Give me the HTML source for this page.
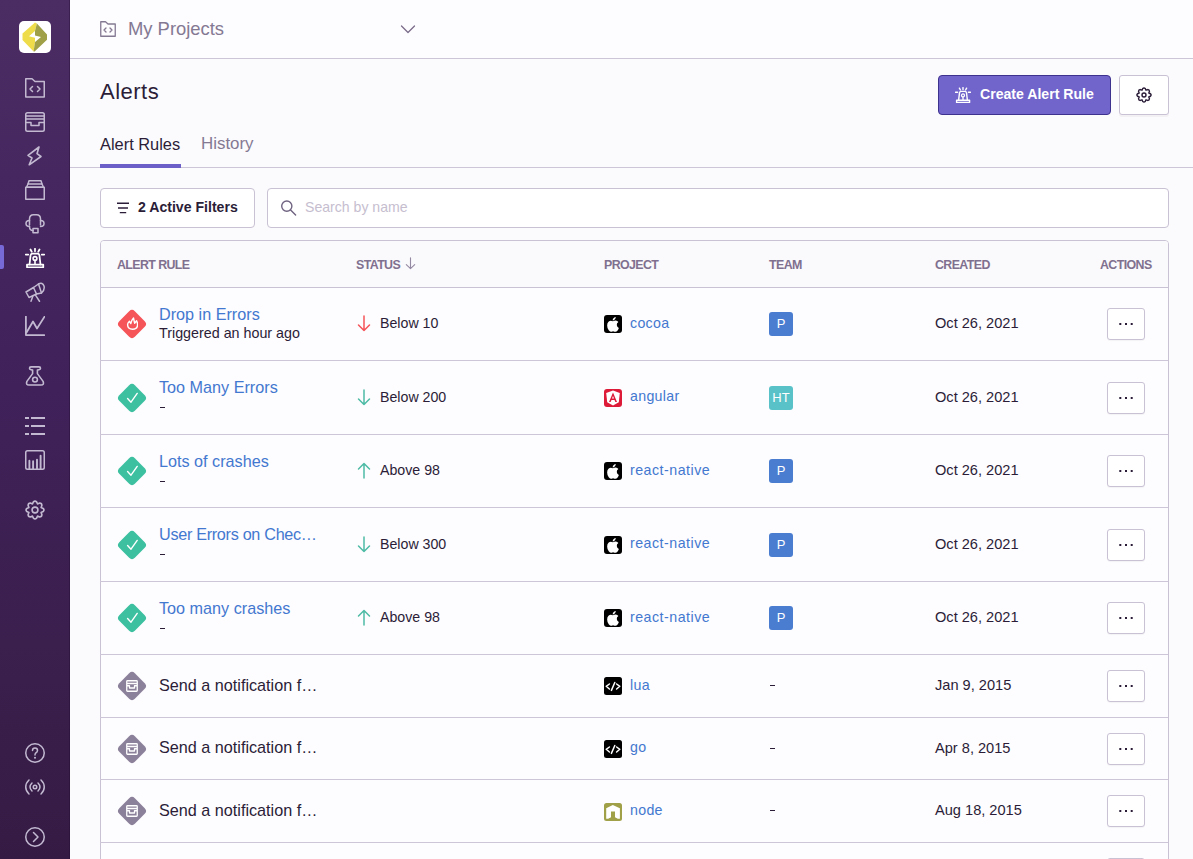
<!DOCTYPE html>
<html><head><meta charset="utf-8">
<style>
*{box-sizing:border-box;margin:0;padding:0}
html,body{width:1193px;height:859px;overflow:hidden;background:#fbfafc;font-family:"Liberation Sans",sans-serif;color:#2b1d38}
.abs{position:absolute}
.t{position:absolute;white-space:nowrap;line-height:1}
.link{color:#4378d0}
#sb{position:absolute;left:0;top:0;width:70px;height:859px;background:linear-gradient(180deg,#4b2c63 0%,#40215a 45%,#3b1f4d 75%,#351b44 100%)}
.th{position:absolute;top:258.5px;font-size:12.4px;letter-spacing:-0.6px;font-weight:700;color:#80708f;white-space:nowrap;line-height:1}
</style></head><body>
<div id="sb"></div>
<div class="abs" style="left:69px;top:0;width:1px;height:859px;background:rgba(30,10,45,0.35)"></div>
<div class="abs" style="left:19px;top:21px;width:32px;height:32px;background:#fff;border-radius:5px"></div>
<svg class="abs" style="left:19px;top:21px;" width="32" height="32" viewBox="0 0 32 32"><path d="M16 1.5 L3.5 12.5 L3.5 19 L14.6 30.5 L16 21 L16 16.8 L10 15.3 L16 10 L17.9 2.5 Z" fill="#efdc4b"/><path d="M17.9 2.5 L28 13.5 L28 18.8 L15.6 30.6 L14.6 30.5 L16 21 L22 16 L16 14.5 L16 10 Z" fill="#9fa047"/></svg>
<svg class="abs" style="left:25px;top:78px;" width="20" height="20" viewBox="0 0 20 20"><path d="M0.75 19 V0.75 H7 L10 3.5 H19.25 V19 Z" fill="none" stroke="#c3bad2" stroke-width="1.5" stroke-linecap="round" stroke-linejoin="round" /><path d="M7.5 8.5 L5 11 L7.5 13.5 M12.5 8.5 L15 11 L12.5 13.5" fill="none" stroke="#c3bad2" stroke-width="1.5" stroke-linecap="round" stroke-linejoin="round" /></svg>
<svg class="abs" style="left:25px;top:112px;" width="20" height="20" viewBox="0 0 20 20"><path d="M2.5 0.75 H17.5 Q19.25 0.75 19.25 2.5 V17.5 Q19.25 19.25 17.5 19.25 H2.5 Q0.75 19.25 0.75 17.5 V2.5 Q0.75 0.75 2.5 0.75 Z" fill="none" stroke="#c3bad2" stroke-width="1.5" stroke-linecap="round" stroke-linejoin="round" /><path d="M0.75 4 H19.25 M0.75 7 H19.25" fill="none" stroke="#c3bad2" stroke-width="1.5" stroke-linecap="round" stroke-linejoin="round" /><path d="M0.75 10.5 H6 V13.5 H14 V10.5 H19.25" fill="none" stroke="#c3bad2" stroke-width="1.5" stroke-linecap="round" stroke-linejoin="round" /></svg>
<svg class="abs" style="left:25px;top:146px;" width="20" height="20" viewBox="0 0 20 20"><path d="M14 1 L3 9.3 L7 12 L4.2 18.8 L16 10.5 L12 7.7 Z" fill="none" stroke="#c3bad2" stroke-width="1.6" stroke-linecap="round" stroke-linejoin="round" /></svg>
<svg class="abs" style="left:25px;top:180px;" width="20" height="20" viewBox="0 0 20 20"><path d="M4 0.75 H16 L17 4 H3 Z" fill="none" stroke="#c3bad2" stroke-width="1.5" stroke-linecap="round" stroke-linejoin="round" /><path d="M3 4 L1.5 7.25 H18.5 L17 4" fill="none" stroke="#c3bad2" stroke-width="1.5" stroke-linecap="round" stroke-linejoin="round" /><path d="M0.75 7.25 H19.25 V19.25 H0.75 Z" fill="none" stroke="#c3bad2" stroke-width="1.5" stroke-linecap="round" stroke-linejoin="round" /></svg>
<svg class="abs" style="left:25px;top:214px;" width="20" height="20" viewBox="0 0 20 20"><path d="M4.5 11 V5 Q4.5 0.75 8.5 0.75 H11.5 Q15.5 0.75 15.5 5 V11" fill="none" stroke="#c3bad2" stroke-width="1.5" stroke-linecap="round" stroke-linejoin="round" /><path d="M4.5 6.5 Q1 6.5 1 9.5 Q1 12.5 4.5 12.5 M15.5 6.5 Q19 6.5 19 9.5 Q19 12.5 15.5 12.5" fill="none" stroke="#c3bad2" stroke-width="1.5" stroke-linecap="round" stroke-linejoin="round" /><path d="M4.5 12.5 Q4.5 16.5 8 16.5" fill="none" stroke="#c3bad2" stroke-width="1.5" stroke-linecap="round" stroke-linejoin="round" /><path d="M8 14.5 H13 V18.75 H8 Z" fill="none" stroke="#c3bad2" stroke-width="1.5" stroke-linecap="round" stroke-linejoin="round" /></svg>
<svg class="abs" style="left:25px;top:248px;" width="20" height="20" viewBox="0 0 20 20"><path d="M4.5 16.5 L5.6 7.2 Q5.9 5.5 7.6 5.5 H12.4 Q14.1 5.5 14.4 7.2 L15.5 16.5" fill="none" stroke="#ffffff" stroke-width="1.75" stroke-linecap="round" stroke-linejoin="round" /><path d="M2 16.5 H18.25 V19.25 H2 Z" fill="none" stroke="#ffffff" stroke-width="1.75" stroke-linecap="round" stroke-linejoin="round" /><path d="M10 0.75 V3.25 M5.5 1.5 L6.75 3.75 M14.5 1.5 L13.25 3.75 M0.75 6.5 H3.25 M16.75 6.5 H19.25" fill="none" stroke="#ffffff" stroke-width="1.75" stroke-linecap="round" stroke-linejoin="round" /><circle cx="10" cy="10.5" r="1.9" fill="none" stroke="#ffffff" stroke-width="1.6"/><path d="M10 12.4 V16" fill="none" stroke="#ffffff" stroke-width="1.6" stroke-linecap="round" stroke-linejoin="round" /></svg>
<svg class="abs" style="left:25px;top:282px;" width="20" height="20" viewBox="0 0 20 20"><path d="M1 10 L8.5 5.5 L11.5 12 L4 15.5 Z" fill="none" stroke="#c3bad2" stroke-width="1.5" stroke-linecap="round" stroke-linejoin="round" /><path d="M8.5 5.5 L13.5 2 Q17.5 0 19 4 Q20 8 16.5 11 L11.5 12" fill="none" stroke="#c3bad2" stroke-width="1.5" stroke-linecap="round" stroke-linejoin="round" /><path d="M13.5 2 L16.5 11" fill="none" stroke="#c3bad2" stroke-width="1.5" stroke-linecap="round" stroke-linejoin="round" /><path d="M8 13.8 L6 19.25 M10.3 12.9 L14.5 19.25" fill="none" stroke="#c3bad2" stroke-width="1.5" stroke-linecap="round" stroke-linejoin="round" /></svg>
<svg class="abs" style="left:25px;top:316px;" width="20" height="20" viewBox="0 0 20 20"><path d="M0.9 0.5 V19.1 H19.25" fill="none" stroke="#c3bad2" stroke-width="1.75" stroke-linecap="round" stroke-linejoin="round" /><path d="M1.5 16.5 L8 5.5 L12 12.5 L19.5 0.75" fill="none" stroke="#c3bad2" stroke-width="1.75" stroke-linecap="round" stroke-linejoin="round" /></svg>
<svg class="abs" style="left:25px;top:366px;" width="20" height="20" viewBox="0 0 20 20"><path d="M6 0.9 H14 Q15.5 0.9 15.5 2.3 Q15.5 3.6 14 3.8 L12.4 4.1 V7.6 L18.1 15.4 Q19.5 19 16 19 H4 Q0.5 19 1.9 15.4 L7.6 7.6 V4.1 L6 3.8 Q4.5 3.6 4.5 2.3 Q4.5 0.9 6 0.9 Z" fill="none" stroke="#c3bad2" stroke-width="1.6" stroke-linecap="round" stroke-linejoin="round" /><circle cx="10" cy="13.6" r="2.4" fill="none" stroke="#c3bad2" stroke-width="1.6"/></svg>
<svg class="abs" style="left:25px;top:416px;" width="20" height="20" viewBox="0 0 20 20"><path d="M0 2 H4 M6 2 H20 M0 10 H4 M6 10 H20 M0 18 H4 M6 18 H20" stroke="#c3bad2" stroke-width="2" fill="none"/></svg>
<svg class="abs" style="left:25px;top:450px;" width="20" height="20" viewBox="0 0 20 20"><path d="M2.5 0.75 H17.5 Q19.25 0.75 19.25 2.5 V17.5 Q19.25 19.25 17.5 19.25 H2.5 Q0.75 19.25 0.75 17.5 V2.5 Q0.75 0.75 2.5 0.75 Z" fill="none" stroke="#c3bad2" stroke-width="1.5" stroke-linecap="round" stroke-linejoin="round" /><path d="M4.4 18.5 V10.8 M8.1 18.5 V11.3 M12 18.5 V9.7 M15.6 18.5 V5.8" fill="none" stroke="#c3bad2" stroke-width="1.9" stroke-linecap="round" stroke-linejoin="round" /></svg>
<svg class="abs" style="left:25px;top:500px;" width="20" height="20" viewBox="0 0 20 20"><path d="M7.47 3.90 L8.42 1.85 Q10.00 0.28 11.58 1.85 L12.53 3.90 L14.64 3.12 Q16.87 3.13 16.88 5.36 L16.10 7.47 L18.15 8.42 Q19.72 10.00 18.15 11.58 L16.10 12.53 L16.88 14.64 Q16.87 16.87 14.64 16.88 L12.53 16.10 L11.58 18.15 Q10.00 19.72 8.42 18.15 L7.47 16.10 L5.36 16.88 Q3.13 16.87 3.12 14.64 L3.90 12.53 L1.85 11.58 Q0.28 10.00 1.85 8.42 L3.90 7.47 L3.12 5.36 Q3.13 3.13 5.36 3.12 Z" fill="none" stroke="#c3bad2" stroke-width="1.6" stroke-linecap="round" stroke-linejoin="round" /><circle cx="10" cy="10" r="2.9" fill="none" stroke="#c3bad2" stroke-width="1.6"/></svg>
<svg class="abs" style="left:25px;top:743px;" width="20" height="20" viewBox="0 0 20 20"><circle cx="10" cy="10" r="9.25" fill="none" stroke="#c3bad2" stroke-width="1.5"/><path d="M7.5 7.5 Q7.5 5 10 5 Q12.5 5 12.5 7.5 Q12.5 9 10.75 10 Q10 10.5 10 12" fill="none" stroke="#c3bad2" stroke-width="1.5" stroke-linecap="round" stroke-linejoin="round" /><circle cx="10" cy="14.75" r="1" fill="#c3bad2"/></svg>
<svg class="abs" style="left:25px;top:777px;" width="20" height="20" viewBox="0 0 20 20"><path d="M4 3 Q0.75 6 0.75 10 Q0.75 14 4 17 M16 3 Q19.25 6 19.25 10 Q19.25 14 16 17 M7 6 Q5 8 5 10 Q5 12 7 14 M13 6 Q15 8 15 10 Q15 12 13 14" fill="none" stroke="#c3bad2" stroke-width="1.5" stroke-linecap="round" stroke-linejoin="round" /><circle cx="10" cy="10" r="1.75" fill="none" stroke="#c3bad2" stroke-width="1.5"/></svg>
<svg class="abs" style="left:25px;top:827px;" width="20" height="20" viewBox="0 0 20 20"><circle cx="10" cy="10" r="9.25" fill="none" stroke="#c3bad2" stroke-width="1.5"/><path d="M8.5 5.5 L13 10 L8.5 14.5" fill="none" stroke="#c3bad2" stroke-width="1.5" stroke-linecap="round" stroke-linejoin="round" /></svg>
<div class="abs" style="left:0;top:245px;width:4px;height:24px;background:#776ad6;border-radius:0 2px 2px 0"></div>
<div class="abs" style="left:70px;top:0;width:1123px;height:59px;background:#fdfcfe;border-bottom:1px solid #cdc6d8"></div>
<svg class="abs" style="left:100px;top:21px;" width="16" height="16" viewBox="0 0 16 16"><path d="M0.75 15.25 V0.75 H5.5 L8 3 H15.25 V15.25 Z" fill="none" stroke="#847993" stroke-width="1.3" stroke-linecap="round" stroke-linejoin="round" /><path d="M6 7 L4 9 L6 11 M10 7 L12 9 L10 11" fill="none" stroke="#847993" stroke-width="1.3" stroke-linecap="round" stroke-linejoin="round" /></svg>
<div class="t" style="left:128px;top:20px;font-size:18.4px;color:#847993">My Projects</div>
<svg class="abs" style="left:400px;top:23px;" width="16" height="12" viewBox="0 0 16 12"><path d="M1.5 3 L8 9.5 L14.5 3" fill="none" stroke="#7a6c8a" stroke-width="1.3" stroke-linecap="round" stroke-linejoin="round" /></svg>
<div class="abs" style="left:70px;top:59px;width:1123px;height:109px;background:#fbfafc;border-bottom:1px solid #cdc6d8"></div>
<div class="t" style="left:100px;top:80.5px;font-size:22px;letter-spacing:0.5px">Alerts</div>
<div class="t" style="left:100px;top:135.5px;font-size:16.4px">Alert Rules</div>
<div class="t" style="left:201px;top:136px;font-size:16.9px;color:#847993">History</div>
<div class="abs" style="left:100px;top:164px;width:81px;height:4px;background:#6c5fc7"></div>
<div class="abs" style="left:938px;top:75px;width:173px;height:40px;background:#7164cb;border:1px solid #3e328f;border-radius:4px"></div>
<svg class="abs" style="left:955px;top:87px;" width="16" height="16" viewBox="0 0 16 16"><path d="M3.6 13.2 L4.5 5.8 Q4.7 4.4 6.1 4.4 H9.9 Q11.3 4.4 11.5 5.8 L12.4 13.2" fill="none" stroke="#fff" stroke-width="1.4" stroke-linecap="round" stroke-linejoin="round" /><path d="M1.6 13.2 H14.6 V15.4 H1.6 Z" fill="none" stroke="#fff" stroke-width="1.4" stroke-linecap="round" stroke-linejoin="round" /><path d="M8 0.6 V2.6 M4.4 1.2 L5.4 3 M11.6 1.2 L10.6 3 M0.6 5.2 H2.6 M13.4 5.2 H15.4" fill="none" stroke="#fff" stroke-width="1.4" stroke-linecap="round" stroke-linejoin="round" /><circle cx="8" cy="8.4" r="1.5" fill="none" stroke="#fff" stroke-width="1.3"/><path d="M8 9.9 V13" fill="none" stroke="#fff" stroke-width="1.3" stroke-linecap="round" stroke-linejoin="round" /></svg>
<div class="t" style="left:980px;top:87px;font-size:14.1px;font-weight:700;color:#fff">Create Alert Rule</div>
<div class="abs" style="left:1119px;top:75px;width:50px;height:40px;background:#fff;border:1px solid #c9c1d4;border-radius:3px;box-shadow:0 2px 0 rgba(43,29,56,0.04)"></div>
<svg class="abs" style="left:1136px;top:87px;" width="16" height="16" viewBox="0 0 16 16"><path d="M6.01 3.20 L6.74 1.52 Q8.00 0.33 9.26 1.52 L9.99 3.20 L11.69 2.53 Q13.42 2.58 13.47 4.31 L12.80 6.01 L14.48 6.74 Q15.67 8.00 14.48 9.26 L12.80 9.99 L13.47 11.69 Q13.42 13.42 11.69 13.47 L9.99 12.80 L9.26 14.48 Q8.00 15.67 6.74 14.48 L6.01 12.80 L4.31 13.47 Q2.58 13.42 2.53 11.69 L3.20 9.99 L1.52 9.26 Q0.33 8.00 1.52 6.74 L3.20 6.01 L2.53 4.31 Q2.58 2.58 4.31 2.53 Z" fill="none" stroke="#2b1d38" stroke-width="1.4" stroke-linecap="round" stroke-linejoin="round" /><circle cx="8" cy="8" r="2" fill="none" stroke="#2b1d38" stroke-width="1.4"/></svg>
<div class="abs" style="left:100px;top:188px;width:155px;height:40px;background:#fff;border:1px solid #c9c1d4;border-radius:4px"></div>
<svg class="abs" style="left:117px;top:202px;" width="12" height="12" viewBox="0 0 12 12"><path d="M0 1.3 H12 M1 6 H11 M2.8 10.6 H9.2" stroke="#2b1d38" stroke-width="1.4" fill="none"/></svg>
<div class="t" style="left:138px;top:200px;font-size:14.1px;font-weight:700">2 Active Filters</div>
<div class="abs" style="left:267px;top:188px;width:902px;height:40px;background:#fff;border:1px solid #c9c1d4;border-radius:4px"></div>
<svg class="abs" style="left:280px;top:200px;" width="17" height="17" viewBox="0 0 17 17"><circle cx="6.8" cy="6.1" r="5.1" fill="none" stroke="#6f6381" stroke-width="1.4"/><path d="M10.6 9.9 L15.6 15" fill="none" stroke="#6f6381" stroke-width="1.4" stroke-linecap="round" stroke-linejoin="round" /></svg>
<div class="t" style="left:305px;top:200px;font-size:14.1px;color:#c6becf">Search by name</div>
<div class="abs" style="left:100px;top:240px;width:1069px;height:640px;background:#fdfcfe;border:1px solid #c9c1d4;border-radius:4px"></div>
<div class="abs" style="left:101px;top:241px;width:1067px;height:46px;background:#faf9fb;border-radius:3px 3px 0 0"></div>
<div class="abs" style="left:100px;top:287px;width:1068px;height:1px;background:#c9c1d4"></div>
<div class="th" style="left:117px">ALERT RULE</div>
<div class="th" style="left:356px">STATUS</div>
<svg class="abs" style="left:405px;top:257px;" width="11" height="13" viewBox="0 0 11 13"><path d="M5.5 0.8 V11.6 M1.3 7.6 L5.5 11.6 L9.7 7.6" fill="none" stroke="#9489a3" stroke-width="1.1" stroke-linecap="round" stroke-linejoin="round" /></svg>
<div class="th" style="left:604px">PROJECT</div>
<div class="th" style="left:769px">TEAM</div>
<div class="th" style="left:935px">CREATED</div>
<div class="th" style="left:1100px">ACTIONS</div>
<div class="abs" style="left:100px;top:360px;width:1068px;height:1px;background:#cdc6d8"></div>
<div class="abs" style="left:121px;top:313px;width:22px;height:22px;background:#f55459;border-radius:4px;transform:rotate(45deg)"></div><svg class="abs" style="left:126px;top:317px;" width="12" height="14" viewBox="0 0 12 14"><path d="M6.6 12.2 Q1.6 12.2 1.6 7.6 Q1.6 5.8 3.4 4.2 L4.8 6.6 Q5.6 3 7.5 1 L8.6 6.2 L10.6 3.8 Q11.6 5.6 11.6 7.6 Q11.6 12.2 6.6 12.2 Z" fill="none" stroke="#fff" stroke-width="1.4" stroke-linecap="round" stroke-linejoin="round" /></svg>
<div class="t link" style="left:159px;top:306px;font-size:16.2px">Drop in Errors</div>
<div class="t" style="left:159px;top:326px;font-size:14.3px">Triggered an hour ago</div>
<svg class="abs" style="left:357px;top:315px;" width="14" height="17" viewBox="0 0 14 17"><path d="M7 1 V15.5 M1.5 10 L7 15.5 L12.5 10" fill="none" stroke="#f55459" stroke-width="1.5" stroke-linecap="round" stroke-linejoin="round" /></svg>
<div class="t" style="left:380px;top:316px;font-size:14.2px">Below 10</div>
<div class="abs" style="left:769px;top:312px;width:24px;height:24px;border-radius:3px;background:#4a7dd0;color:#fff;font-size:13px;line-height:24px;text-align:center">P</div>
<div class="abs" style="left:604px;top:315px;width:18px;height:18px;background:#000;border-radius:3px"></div><svg class="abs" style="left:604px;top:315px;" width="18" height="18" viewBox="0 0 18 18"><g transform="translate(9 9.2) scale(1.22) translate(-9 -9)"><path d="M11.3 3.2 Q11.2 4.6 10.2 5.4 Q9.4 6 8.7 5.9 Q8.7 4.6 9.6 3.9 Q10.4 3.3 11.3 3.2 Z" fill="#fff"/><path d="M9 6.6 Q10.3 5.9 11.3 6 Q12.6 6.1 13.4 7.2 Q12 8.1 12.1 9.7 Q12.2 11.4 13.8 12.1 Q13.4 13.3 12.6 14.3 Q11.8 15.3 10.9 15.2 Q10.2 15.2 9.6 14.9 Q9 14.7 8.5 14.9 Q7.8 15.2 7.2 15.2 Q6.3 15.2 5.5 14 Q4.2 12.1 4.2 10 Q4.2 8 5.3 7 Q6.2 6.1 7.3 6.1 Q8 6.1 9 6.6 Z" fill="#fff"/></g></svg>
<div class="t link" style="left:630px;top:316px;font-size:14.2px;letter-spacing:0.3px">cocoa</div>
<div class="t" style="left:935px;top:316px;font-size:14.6px">Oct 26, 2021</div>
<div class="abs" style="left:1107px;top:308px;width:38px;height:32px;border:1px solid #c9c1d4;border-radius:3px;background:#fff;box-shadow:0 1px 1px rgba(0,0,0,0.04)"></div>
<svg class="abs" style="left:1107px;top:308px;" width="38" height="32" viewBox="0 0 38 32"><rect x="12.3" y="15" width="2" height="2" fill="#2b1d38"/><rect x="18" y="15" width="2" height="2" fill="#2b1d38"/><rect x="23.7" y="15" width="2" height="2" fill="#2b1d38"/></svg>
<div class="abs" style="left:100px;top:434px;width:1068px;height:1px;background:#cdc6d8"></div>
<div class="abs" style="left:121px;top:387px;width:22px;height:22px;background:#3cc0a0;border-radius:4px;transform:rotate(45deg)"></div><svg class="abs" style="left:126px;top:392px;" width="12" height="12" viewBox="0 0 12 12"><path d="M1.6 6.6 L5 10.2 L11.2 1.4" fill="none" stroke="#fff" stroke-width="1.4" stroke-linecap="round" stroke-linejoin="round" /></svg>
<div class="t link" style="left:159px;top:379px;font-size:16.2px">Too Many Errors</div>
<div class="abs" style="left:160px;top:406.5px;width:4.6px;height:1.7px;background:#2b1d38"></div>
<svg class="abs" style="left:357px;top:389px;" width="14" height="17" viewBox="0 0 14 17"><path d="M7 1 V15.5 M1.5 10 L7 15.5 L12.5 10" fill="none" stroke="#4dbba5" stroke-width="1.5" stroke-linecap="round" stroke-linejoin="round" /></svg>
<div class="t" style="left:380px;top:390px;font-size:14.2px">Below 200</div>
<div class="abs" style="left:769px;top:386px;width:24px;height:24px;border-radius:3px;background:#58c2c8;color:#fff;font-size:13px;line-height:24px;text-align:center">HT</div>
<div class="abs" style="left:604px;top:389px;width:18px;height:18px;background:#dd1b38;border-radius:3px"></div><svg class="abs" style="left:604px;top:389px;" width="18" height="18" viewBox="0 0 18 18"><path d="M9 1.6 L15.8 3.9 L14.8 13.2 L9 16.4 L3.2 13.2 L2.2 3.9 Z" fill="#fff"/><path d="M9 3.6 L5 13 H6.6 L7.5 10.9 H10.5 L11.4 13 H13 Z M8 9.5 L9 7 L10 9.5 Z" fill="#dd1b38"/></svg>
<div class="t link" style="left:630px;top:389px;font-size:14.2px;letter-spacing:0.3px">angular</div>
<div class="t" style="left:935px;top:390px;font-size:14.6px">Oct 26, 2021</div>
<div class="abs" style="left:1107px;top:382px;width:38px;height:32px;border:1px solid #c9c1d4;border-radius:3px;background:#fff;box-shadow:0 1px 1px rgba(0,0,0,0.04)"></div>
<svg class="abs" style="left:1107px;top:382px;" width="38" height="32" viewBox="0 0 38 32"><rect x="12.3" y="15" width="2" height="2" fill="#2b1d38"/><rect x="18" y="15" width="2" height="2" fill="#2b1d38"/><rect x="23.7" y="15" width="2" height="2" fill="#2b1d38"/></svg>
<div class="abs" style="left:100px;top:507px;width:1068px;height:1px;background:#cdc6d8"></div>
<div class="abs" style="left:121px;top:460px;width:22px;height:22px;background:#3cc0a0;border-radius:4px;transform:rotate(45deg)"></div><svg class="abs" style="left:126px;top:465px;" width="12" height="12" viewBox="0 0 12 12"><path d="M1.6 6.6 L5 10.2 L11.2 1.4" fill="none" stroke="#fff" stroke-width="1.4" stroke-linecap="round" stroke-linejoin="round" /></svg>
<div class="t link" style="left:159px;top:453px;font-size:16.2px">Lots of crashes</div>
<div class="abs" style="left:160px;top:480.5px;width:4.6px;height:1.7px;background:#2b1d38"></div>
<svg class="abs" style="left:357px;top:462px;" width="14" height="17" viewBox="0 0 14 17"><path d="M7 16 V1.5 M1.5 7 L7 1.5 L12.5 7" fill="none" stroke="#4dbba5" stroke-width="1.5" stroke-linecap="round" stroke-linejoin="round" /></svg>
<div class="t" style="left:380px;top:463px;font-size:14.2px">Above 98</div>
<div class="abs" style="left:769px;top:459px;width:24px;height:24px;border-radius:3px;background:#4a7dd0;color:#fff;font-size:13px;line-height:24px;text-align:center">P</div>
<div class="abs" style="left:604px;top:462px;width:18px;height:18px;background:#000;border-radius:3px"></div><svg class="abs" style="left:604px;top:462px;" width="18" height="18" viewBox="0 0 18 18"><g transform="translate(9 9.2) scale(1.22) translate(-9 -9)"><path d="M11.3 3.2 Q11.2 4.6 10.2 5.4 Q9.4 6 8.7 5.9 Q8.7 4.6 9.6 3.9 Q10.4 3.3 11.3 3.2 Z" fill="#fff"/><path d="M9 6.6 Q10.3 5.9 11.3 6 Q12.6 6.1 13.4 7.2 Q12 8.1 12.1 9.7 Q12.2 11.4 13.8 12.1 Q13.4 13.3 12.6 14.3 Q11.8 15.3 10.9 15.2 Q10.2 15.2 9.6 14.9 Q9 14.7 8.5 14.9 Q7.8 15.2 7.2 15.2 Q6.3 15.2 5.5 14 Q4.2 12.1 4.2 10 Q4.2 8 5.3 7 Q6.2 6.1 7.3 6.1 Q8 6.1 9 6.6 Z" fill="#fff"/></g></svg>
<div class="t link" style="left:630px;top:463px;font-size:14.2px;letter-spacing:0.5px">react-native</div>
<div class="t" style="left:935px;top:463px;font-size:14.6px">Oct 26, 2021</div>
<div class="abs" style="left:1107px;top:455px;width:38px;height:32px;border:1px solid #c9c1d4;border-radius:3px;background:#fff;box-shadow:0 1px 1px rgba(0,0,0,0.04)"></div>
<svg class="abs" style="left:1107px;top:455px;" width="38" height="32" viewBox="0 0 38 32"><rect x="12.3" y="15" width="2" height="2" fill="#2b1d38"/><rect x="18" y="15" width="2" height="2" fill="#2b1d38"/><rect x="23.7" y="15" width="2" height="2" fill="#2b1d38"/></svg>
<div class="abs" style="left:100px;top:581px;width:1068px;height:1px;background:#cdc6d8"></div>
<div class="abs" style="left:121px;top:534px;width:22px;height:22px;background:#3cc0a0;border-radius:4px;transform:rotate(45deg)"></div><svg class="abs" style="left:126px;top:539px;" width="12" height="12" viewBox="0 0 12 12"><path d="M1.6 6.6 L5 10.2 L11.2 1.4" fill="none" stroke="#fff" stroke-width="1.4" stroke-linecap="round" stroke-linejoin="round" /></svg>
<div class="t link" style="left:159px;top:526px;font-size:16.2px;letter-spacing:-0.3px">User Errors on Chec…</div>
<div class="abs" style="left:160px;top:553.5px;width:4.6px;height:1.7px;background:#2b1d38"></div>
<svg class="abs" style="left:357px;top:536px;" width="14" height="17" viewBox="0 0 14 17"><path d="M7 1 V15.5 M1.5 10 L7 15.5 L12.5 10" fill="none" stroke="#4dbba5" stroke-width="1.5" stroke-linecap="round" stroke-linejoin="round" /></svg>
<div class="t" style="left:380px;top:537px;font-size:14.2px">Below 300</div>
<div class="abs" style="left:769px;top:533px;width:24px;height:24px;border-radius:3px;background:#4a7dd0;color:#fff;font-size:13px;line-height:24px;text-align:center">P</div>
<div class="abs" style="left:604px;top:536px;width:18px;height:18px;background:#000;border-radius:3px"></div><svg class="abs" style="left:604px;top:536px;" width="18" height="18" viewBox="0 0 18 18"><g transform="translate(9 9.2) scale(1.22) translate(-9 -9)"><path d="M11.3 3.2 Q11.2 4.6 10.2 5.4 Q9.4 6 8.7 5.9 Q8.7 4.6 9.6 3.9 Q10.4 3.3 11.3 3.2 Z" fill="#fff"/><path d="M9 6.6 Q10.3 5.9 11.3 6 Q12.6 6.1 13.4 7.2 Q12 8.1 12.1 9.7 Q12.2 11.4 13.8 12.1 Q13.4 13.3 12.6 14.3 Q11.8 15.3 10.9 15.2 Q10.2 15.2 9.6 14.9 Q9 14.7 8.5 14.9 Q7.8 15.2 7.2 15.2 Q6.3 15.2 5.5 14 Q4.2 12.1 4.2 10 Q4.2 8 5.3 7 Q6.2 6.1 7.3 6.1 Q8 6.1 9 6.6 Z" fill="#fff"/></g></svg>
<div class="t link" style="left:630px;top:536px;font-size:14.2px;letter-spacing:0.5px">react-native</div>
<div class="t" style="left:935px;top:537px;font-size:14.6px">Oct 26, 2021</div>
<div class="abs" style="left:1107px;top:529px;width:38px;height:32px;border:1px solid #c9c1d4;border-radius:3px;background:#fff;box-shadow:0 1px 1px rgba(0,0,0,0.04)"></div>
<svg class="abs" style="left:1107px;top:529px;" width="38" height="32" viewBox="0 0 38 32"><rect x="12.3" y="15" width="2" height="2" fill="#2b1d38"/><rect x="18" y="15" width="2" height="2" fill="#2b1d38"/><rect x="23.7" y="15" width="2" height="2" fill="#2b1d38"/></svg>
<div class="abs" style="left:100px;top:654px;width:1068px;height:1px;background:#cdc6d8"></div>
<div class="abs" style="left:121px;top:607px;width:22px;height:22px;background:#3cc0a0;border-radius:4px;transform:rotate(45deg)"></div><svg class="abs" style="left:126px;top:612px;" width="12" height="12" viewBox="0 0 12 12"><path d="M1.6 6.6 L5 10.2 L11.2 1.4" fill="none" stroke="#fff" stroke-width="1.4" stroke-linecap="round" stroke-linejoin="round" /></svg>
<div class="t link" style="left:159px;top:600px;font-size:16.2px">Too many crashes</div>
<div class="abs" style="left:160px;top:627.5px;width:4.6px;height:1.7px;background:#2b1d38"></div>
<svg class="abs" style="left:357px;top:609px;" width="14" height="17" viewBox="0 0 14 17"><path d="M7 16 V1.5 M1.5 7 L7 1.5 L12.5 7" fill="none" stroke="#4dbba5" stroke-width="1.5" stroke-linecap="round" stroke-linejoin="round" /></svg>
<div class="t" style="left:380px;top:610px;font-size:14.2px">Above 98</div>
<div class="abs" style="left:769px;top:606px;width:24px;height:24px;border-radius:3px;background:#4a7dd0;color:#fff;font-size:13px;line-height:24px;text-align:center">P</div>
<div class="abs" style="left:604px;top:609px;width:18px;height:18px;background:#000;border-radius:3px"></div><svg class="abs" style="left:604px;top:609px;" width="18" height="18" viewBox="0 0 18 18"><g transform="translate(9 9.2) scale(1.22) translate(-9 -9)"><path d="M11.3 3.2 Q11.2 4.6 10.2 5.4 Q9.4 6 8.7 5.9 Q8.7 4.6 9.6 3.9 Q10.4 3.3 11.3 3.2 Z" fill="#fff"/><path d="M9 6.6 Q10.3 5.9 11.3 6 Q12.6 6.1 13.4 7.2 Q12 8.1 12.1 9.7 Q12.2 11.4 13.8 12.1 Q13.4 13.3 12.6 14.3 Q11.8 15.3 10.9 15.2 Q10.2 15.2 9.6 14.9 Q9 14.7 8.5 14.9 Q7.8 15.2 7.2 15.2 Q6.3 15.2 5.5 14 Q4.2 12.1 4.2 10 Q4.2 8 5.3 7 Q6.2 6.1 7.3 6.1 Q8 6.1 9 6.6 Z" fill="#fff"/></g></svg>
<div class="t link" style="left:630px;top:610px;font-size:14.2px;letter-spacing:0.5px">react-native</div>
<div class="t" style="left:935px;top:610px;font-size:14.6px">Oct 26, 2021</div>
<div class="abs" style="left:1107px;top:602px;width:38px;height:32px;border:1px solid #c9c1d4;border-radius:3px;background:#fff;box-shadow:0 1px 1px rgba(0,0,0,0.04)"></div>
<svg class="abs" style="left:1107px;top:602px;" width="38" height="32" viewBox="0 0 38 32"><rect x="12.3" y="15" width="2" height="2" fill="#2b1d38"/><rect x="18" y="15" width="2" height="2" fill="#2b1d38"/><rect x="23.7" y="15" width="2" height="2" fill="#2b1d38"/></svg>
<div class="abs" style="left:100px;top:717px;width:1068px;height:1px;background:#cdc6d8"></div>
<div class="abs" style="left:121px;top:675px;width:22px;height:22px;background:#8c819b;border-radius:4px;transform:rotate(45deg)"></div><svg class="abs" style="left:126px;top:680px;" width="12" height="12" viewBox="0 0 12 12"><path d="M1.5 0.75 H10.5 Q11.25 0.75 11.25 1.5 V10.5 Q11.25 11.25 10.5 11.25 H1.5 Q0.75 11.25 0.75 10.5 V1.5 Q0.75 0.75 1.5 0.75 Z M0.75 3.5 H11.25 M0.75 5.75 H3.5 V8 H8.5 V5.75 H11.25" fill="none" stroke="#fff" stroke-width="1.3" stroke-linecap="round" stroke-linejoin="round" /></svg>
<div class="t" style="left:159px;top:677px;font-size:16.2px">Send a notification f…</div>
<div class="abs" style="left:770px;top:685px;width:5px;height:1.4px;background:#2b1d38"></div>
<div class="abs" style="left:604px;top:677px;width:18px;height:18px;background:#000;border-radius:2.5px"></div><svg class="abs" style="left:604px;top:677px;" width="18" height="18" viewBox="0 0 18 18"><path d="M5.4 7 L2.2 9.3 L5.4 12 M12.6 7 L15.8 9.3 L12.6 12 M10.8 5.5 L7.4 13.4" fill="none" stroke="#fff" stroke-width="1.5" stroke-linecap="round" stroke-linejoin="round" /></svg>
<div class="t link" style="left:630px;top:678px;font-size:14.2px;letter-spacing:0.3px">lua</div>
<div class="t" style="left:935px;top:678px;font-size:14.6px">Jan 9, 2015</div>
<div class="abs" style="left:1107px;top:670px;width:38px;height:32px;border:1px solid #c9c1d4;border-radius:3px;background:#fff;box-shadow:0 1px 1px rgba(0,0,0,0.04)"></div>
<svg class="abs" style="left:1107px;top:670px;" width="38" height="32" viewBox="0 0 38 32"><rect x="12.3" y="15" width="2" height="2" fill="#2b1d38"/><rect x="18" y="15" width="2" height="2" fill="#2b1d38"/><rect x="23.7" y="15" width="2" height="2" fill="#2b1d38"/></svg>
<div class="abs" style="left:100px;top:779px;width:1068px;height:1px;background:#cdc6d8"></div>
<div class="abs" style="left:121px;top:738px;width:22px;height:22px;background:#8c819b;border-radius:4px;transform:rotate(45deg)"></div><svg class="abs" style="left:126px;top:743px;" width="12" height="12" viewBox="0 0 12 12"><path d="M1.5 0.75 H10.5 Q11.25 0.75 11.25 1.5 V10.5 Q11.25 11.25 10.5 11.25 H1.5 Q0.75 11.25 0.75 10.5 V1.5 Q0.75 0.75 1.5 0.75 Z M0.75 3.5 H11.25 M0.75 5.75 H3.5 V8 H8.5 V5.75 H11.25" fill="none" stroke="#fff" stroke-width="1.3" stroke-linecap="round" stroke-linejoin="round" /></svg>
<div class="t" style="left:159px;top:739px;font-size:16.2px">Send a notification f…</div>
<div class="abs" style="left:770px;top:748px;width:5px;height:1.4px;background:#2b1d38"></div>
<div class="abs" style="left:604px;top:740px;width:18px;height:18px;background:#000;border-radius:2.5px"></div><svg class="abs" style="left:604px;top:740px;" width="18" height="18" viewBox="0 0 18 18"><path d="M5.4 7 L2.2 9.3 L5.4 12 M12.6 7 L15.8 9.3 L12.6 12 M10.8 5.5 L7.4 13.4" fill="none" stroke="#fff" stroke-width="1.5" stroke-linecap="round" stroke-linejoin="round" /></svg>
<div class="t link" style="left:630px;top:740px;font-size:14.2px;letter-spacing:0.3px">go</div>
<div class="t" style="left:935px;top:741px;font-size:14.6px">Apr 8, 2015</div>
<div class="abs" style="left:1107px;top:733px;width:38px;height:32px;border:1px solid #c9c1d4;border-radius:3px;background:#fff;box-shadow:0 1px 1px rgba(0,0,0,0.04)"></div>
<svg class="abs" style="left:1107px;top:733px;" width="38" height="32" viewBox="0 0 38 32"><rect x="12.3" y="15" width="2" height="2" fill="#2b1d38"/><rect x="18" y="15" width="2" height="2" fill="#2b1d38"/><rect x="23.7" y="15" width="2" height="2" fill="#2b1d38"/></svg>
<div class="abs" style="left:100px;top:842px;width:1068px;height:1px;background:#cdc6d8"></div>
<div class="abs" style="left:121px;top:800px;width:22px;height:22px;background:#8c819b;border-radius:4px;transform:rotate(45deg)"></div><svg class="abs" style="left:126px;top:805px;" width="12" height="12" viewBox="0 0 12 12"><path d="M1.5 0.75 H10.5 Q11.25 0.75 11.25 1.5 V10.5 Q11.25 11.25 10.5 11.25 H1.5 Q0.75 11.25 0.75 10.5 V1.5 Q0.75 0.75 1.5 0.75 Z M0.75 3.5 H11.25 M0.75 5.75 H3.5 V8 H8.5 V5.75 H11.25" fill="none" stroke="#fff" stroke-width="1.3" stroke-linecap="round" stroke-linejoin="round" /></svg>
<div class="t" style="left:159px;top:802px;font-size:16.2px">Send a notification f…</div>
<div class="abs" style="left:770px;top:810px;width:5px;height:1.4px;background:#2b1d38"></div>
<div class="abs" style="left:604px;top:803px;width:18px;height:18px;background:#9fa047;border-radius:2.5px"></div><svg class="abs" style="left:604px;top:803px;" width="18" height="18" viewBox="0 0 18 18"><path d="M2.2 5.3 L8.8 2 L15.9 5.3 V15.7 H13.8 L11 14.2 V8.4 H7 V14.2 L4.2 15.7 H2.2 Z" fill="#fff"/></svg>
<div class="t link" style="left:630px;top:803px;font-size:14.2px;letter-spacing:0.3px">node</div>
<div class="t" style="left:935px;top:803px;font-size:14.6px">Aug 18, 2015</div>
<div class="abs" style="left:1107px;top:795px;width:38px;height:32px;border:1px solid #c9c1d4;border-radius:3px;background:#fff;box-shadow:0 1px 1px rgba(0,0,0,0.04)"></div>
<svg class="abs" style="left:1107px;top:795px;" width="38" height="32" viewBox="0 0 38 32"><rect x="12.3" y="15" width="2" height="2" fill="#2b1d38"/><rect x="18" y="15" width="2" height="2" fill="#2b1d38"/><rect x="23.7" y="15" width="2" height="2" fill="#2b1d38"/></svg>
<div class="abs" style="left:100px;top:905px;width:1068px;height:1px;background:#cdc6d8"></div>
<div class="abs" style="left:1107px;top:858px;width:38px;height:32px;border:1px solid #c9c1d4;border-radius:3px;background:#fff;box-shadow:0 1px 1px rgba(0,0,0,0.04)"></div>
<svg class="abs" style="left:1107px;top:858px;" width="38" height="32" viewBox="0 0 38 32"><rect x="12.3" y="15" width="2" height="2" fill="#2b1d38"/><rect x="18" y="15" width="2" height="2" fill="#2b1d38"/><rect x="23.7" y="15" width="2" height="2" fill="#2b1d38"/></svg>
</body></html>
